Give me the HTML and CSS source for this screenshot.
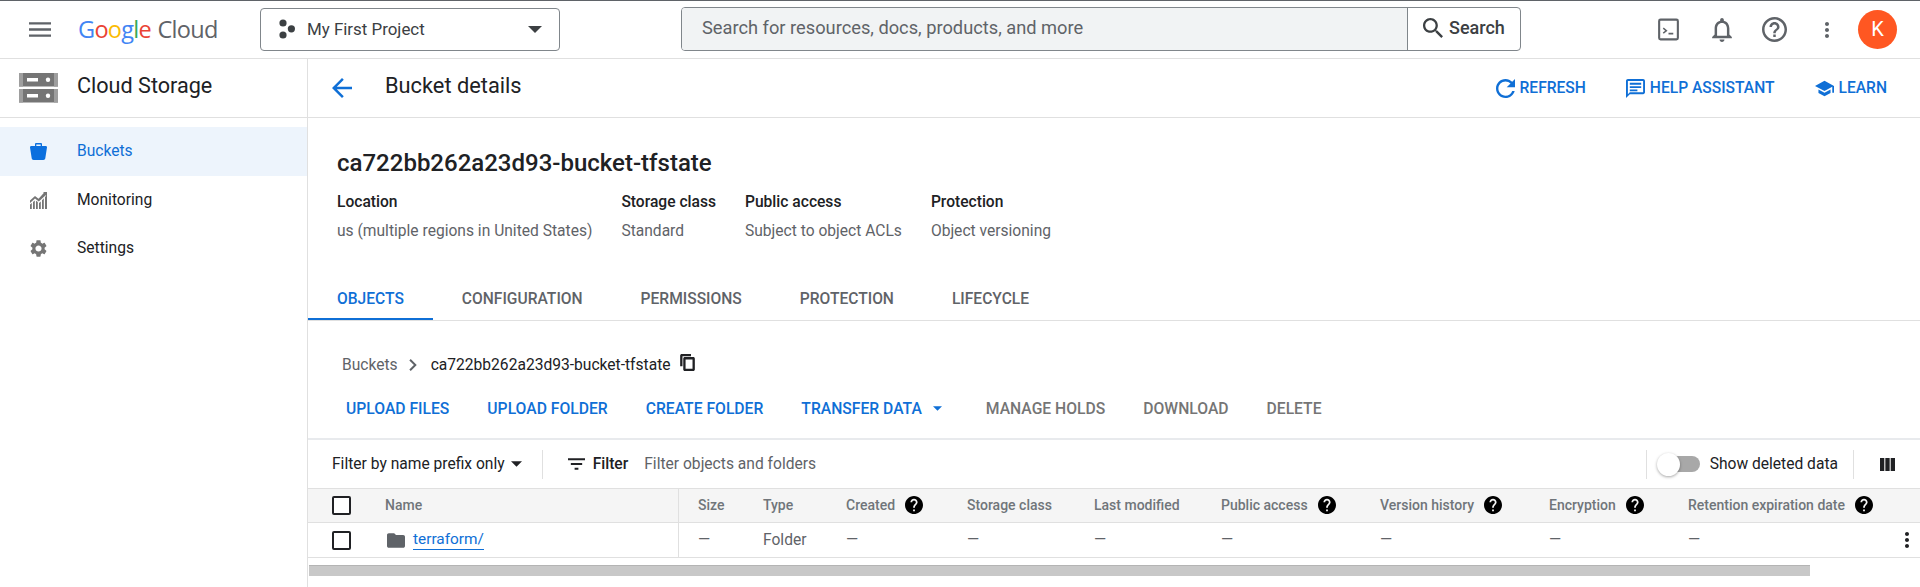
FILE: index.html
```html
<!DOCTYPE html>
<html lang="en">
<head>
  <meta charset="UTF-8">
  <title>Bucket details - Cloud Storage</title>
  <link rel="stylesheet" href="styles.css">
</head>
<body>

  <!-- Icon sprite -->
  <svg class="sprite" aria-hidden="true">
    <symbol id="i-help" viewBox="2 2 20 20"><path d="M12 2C6.48 2 2 6.48 2 12s4.48 10 10 10 10-4.48 10-10S17.52 2 12 2zm1 17h-2v-2h2v2zm2.07-7.75l-.9.92C13.45 12.9 13 13.5 13 15h-2v-.5c0-1.1.45-2.1 1.17-2.83l1.24-1.26c.37-.36.59-.86.59-1.41 0-1.1-.9-2-2-2s-2 .9-2 2H8c0-2.21 1.79-4 4-4s4 1.79 4 4c0 .88-.36 1.68-.93 2.25z"/></symbol>
    <symbol id="i-more" viewBox="0 0 24 24"><path d="M12 8c1.1 0 2-.9 2-2s-.9-2-2-2-2 .9-2 2 .9 2 2 2zm0 2c-1.1 0-2 .9-2 2s.9 2 2 2 2-.9 2-2-.9-2-2-2zm0 6c-1.1 0-2 .9-2 2s.9 2 2 2 2-.9 2-2-.9-2-2-2z"/></symbol>
    <symbol id="i-drop" viewBox="7 10 10 5"><path d="M7 10l5 5 5-5z"/></symbol>
  </svg>

  <!-- Top bar -->
  <header class="topbar">
    <svg class="icon menu-icon" viewBox="3 6 18 12"><path d="M3 18h18v-2H3v2zm0-5h18v-2H3v2zm0-7v2h18V6H3z"/></svg>
    <div class="logo">
      <span class="blue">G</span><span class="red">o</span><span class="yellow">o</span><span class="blue">g</span><span class="green">l</span><span class="red">e</span>
      <span class="logo-cloud">Cloud</span>
    </div>
    <div class="project">
      <svg class="project-icon" viewBox="0 0 16 20"><circle cx="4" cy="4" r="3.6"/><circle cx="12.4" cy="9.8" r="3.6"/><circle cx="4" cy="16" r="3.6"/></svg>
      <span class="project-name">My First Project</span>
      <svg class="project-drop"><use href="#i-drop"/></svg>
    </div>
    <div class="search">
      <div class="search-input">Search for resources, docs, products, and more</div>
      <div class="search-btn">
        <svg class="icon" viewBox="3 3 17.5 17.5"><path d="M15.5 14h-.79l-.28-.27C15.41 12.59 16 11.11 16 9.5 16 5.91 13.09 3 9.5 3S3 5.91 3 9.5 5.91 16 9.5 16c1.61 0 3.09-.59 4.23-1.57l.27.28v.79l5 4.99L20.49 19l-4.99-5zm-6 0C7.01 14 5 11.99 5 9.5S7.01 5 9.5 5 14 7.01 14 9.5 11.99 14 9.5 14z"/></svg>
        <span>Search</span>
      </div>
    </div>
    <div class="top-actions">
      <svg class="icon terminal" viewBox="0 0 22 23"><rect x="1.2" y="1.2" width="19.6" height="20.6" rx="1.5" fill="none" stroke="#5f6368" stroke-width="2.2"/><path d="M6 9.5l4 3.2-4 3.2-1-1.2 2.5-2-2.5-2zM11 15h5v1.7h-5z"/></svg>
      <svg class="icon bell" viewBox="4 2.5 16 19.5"><path d="M12 22c1.1 0 2-.9 2-2h-4c0 1.1.9 2 2 2zm6-6v-5c0-3.07-1.63-5.64-4.5-6.32V4c0-.83-.67-1.5-1.5-1.5s-1.5.67-1.5 1.5v.68C7.64 5.36 6 7.92 6 11v5l-2 2v1h16v-1l-2-2zm-2 1H8v-6c0-2.48 1.51-4.5 4-4.5s4 2.02 4 4.5v6z"/></svg>
      <svg class="icon help-top" viewBox="2 2 20 20"><path d="M11 18h2v-2h-2v2zm1-16C6.48 2 2 6.48 2 12s4.48 10 10 10 10-4.48 10-10S17.52 2 12 2zm0 18c-4.41 0-8-3.59-8-8s3.59-8 8-8 8 3.59 8 8-3.59 8-8 8zm0-14c-2.21 0-4 1.79-4 4h2c0-1.1.9-2 2-2s2 .9 2 2c0 2-3 1.75-3 5h2c0-2.25 3-2.5 3-5 0-2.21-1.79-4-4-4z"/></svg>
      <svg class="icon more-top"><use href="#i-more"/></svg>
      <div class="avatar">K</div>
    </div>
  </header>

  <div class="layout">
    <!-- Sidebar -->
    <aside class="sidebar">
      <div class="side-title">
        <svg class="storage-icon" viewBox="0 0 39 30">
          <path fill="#757575" d="M0 0h39v13.5H0zM0 16h39v13.5H0z"/>
          <path fill="#9e9e9e" d="M0 0h4v13.5H0zM35 0h4v13.5h-4zM0 16h4v13.5H0zM35 16h4v13.5h-4z"/>
          <path fill="#fff" d="M8 5h11v3.5H8zM8 21h11v3.5H8z"/>
          <circle fill="#fff" cx="29" cy="6.7" r="2.2"/><circle fill="#fff" cx="29" cy="22.7" r="2.2"/>
        </svg>
        <span>Cloud Storage</span>
      </div>
      <nav class="side-nav">
        <div class="side-item active">
          <svg class="side-icon" viewBox="0 0 17 17"><path d="M5 1.2C5 .5 5.5 0 6.2 0h4.6c.7 0 1.2.5 1.2 1.2V3h3.6c.9 0 1.4.6 1.4 1.3 0 .2 0 .4-.1.6l-1.6 10.4c-.2 1-.9 1.7-2 1.7H3.7c-1.1 0-1.8-.7-2-1.7L.1 4.9C0 4.7 0 4.5 0 4.3 0 3.6.5 3 1.4 3H5zM6.3 1.4V3h4.4V1.4z"/></svg>
          <span>Buckets</span>
        </div>
        <div class="side-item">
          <svg class="side-icon" viewBox="0 0 17 17"><path d="M0 8.5l5-4.5 3.5 2.8L14 .8 12.8 0H17v4.5l-1.3-1.2-6.9 6.200L5 6.5 0 11zM0 12.5l1.800-1.600V17H0zM3 10l1.800-1.600V17H3zM6 8.800l1.800 1.300V17H6zM9 11l1.800-1.500V17H9zM12 8.200l1.800-2V17H12zM15 5l2-2V17h-2z"/></svg>
          <span>Monitoring</span>
        </div>
        <div class="side-item">
          <svg class="side-icon" viewBox="2.5 2 19 20"><path d="M19.14 12.94c.04-.3.06-.61.06-.94 0-.32-.02-.64-.07-.94l2.03-1.58c.18-.14.23-.41.12-.61l-1.92-3.32c-.12-.22-.37-.29-.59-.22l-2.39.96c-.5-.38-1.03-.7-1.62-.94l-.36-2.54c-.04-.24-.24-.41-.48-.41h-3.84c-.24 0-.43.17-.47.41l-.36 2.54c-.59.24-1.13.57-1.62.94l-2.39-.96c-.22-.08-.47 0-.59.22L2.74 8.87c-.12.21-.08.47.12.61l2.03 1.58c-.05.3-.09.63-.09.94s.02.64.07.94l-2.03 1.58c-.18.14-.23.41-.12.61l1.92 3.32c.12.22.37.29.59.22l2.39-.96c.5.38 1.03.7 1.62.94l.36 2.54c.05.24.24.41.48.41h3.84c.24 0 .44-.17.47-.41l.36-2.54c.59-.24 1.13-.56 1.62-.94l2.39.96c.22.08.47 0 .59-.22l1.92-3.32c.12-.22.07-.47-.12-.61l-2.01-1.58zM12 15.6c-1.98 0-3.6-1.62-3.6-3.6s1.62-3.6 3.6-3.6 3.6 1.62 3.6 3.6-1.62 3.6-3.6 3.6z"/></svg>
          <span>Settings</span>
        </div>
      </nav>
    </aside>

    <!-- Content -->
    <main class="content">
      <div class="page-head">
        <svg class="back" viewBox="4 4 16 16"><path d="M20 11H7.83l5.59-5.59L12 4l-8 8 8 8 1.41-1.41L7.83 13H20v-2z"/></svg>
        <h1 class="page-title">Bucket details</h1>
        <div class="head-actions">
          <div class="head-btn">
            <svg viewBox="4 4 16 16"><path d="M17.65 6.35C16.2 4.9 14.21 4 12 4c-4.42 0-7.99 3.58-7.99 8s3.57 8 7.99 8c3.73 0 6.84-2.55 7.73-6h-2.08c-.82 2.33-3.04 4-5.65 4-3.31 0-6-2.69-6-6s2.69-6 6-6c1.66 0 3.14.69 4.22 1.78L13 11h7V4l-2.35 2.35z"/></svg>
            <span>REFRESH</span>
          </div>
          <div class="head-btn">
            <svg viewBox="2 2 20 20"><path d="M20 2H4c-1.1 0-2 .9-2 2v18l4-4h14c1.1 0 2-.9 2-2V4c0-1.1-.9-2-2-2zm0 14H6l-2 2V4h16v12zM6 6h12v2H6zM6 9.5h12v2H6zM6 13h8v2H6z"/></svg>
            <span>HELP ASSISTANT</span>
          </div>
          <div class="head-btn">
            <svg viewBox="1 3 22 18"><path d="M5 13.18v4L12 21l7-3.82v-4L12 17l-7-3.82zM12 3L1 9l11 6 9-4.91V17h2V9L12 3z"/></svg>
            <span>LEARN</span>
          </div>
        </div>
      </div>

      <section class="bucket-info">
        <h2 class="bucket-name">ca722bb262a23d93-bucket-tfstate</h2>
        <div class="meta">
          <div><div class="meta-label">Location</div><div class="meta-value">us (multiple regions in United States)</div></div>
          <div><div class="meta-label">Storage class</div><div class="meta-value">Standard</div></div>
          <div><div class="meta-label">Public access</div><div class="meta-value">Subject to object ACLs</div></div>
          <div><div class="meta-label">Protection</div><div class="meta-value">Object versioning</div></div>
        </div>
      </section>

      <div class="tabs">
        <div class="tab active">OBJECTS</div>
        <div class="tab">CONFIGURATION</div>
        <div class="tab">PERMISSIONS</div>
        <div class="tab">PROTECTION</div>
        <div class="tab">LIFECYCLE</div>
      </div>

      <div class="crumbs">
        <span class="crumb-root">Buckets</span>
        <svg class="crumb-sep" viewBox="8.5 6 7.5 12"><path d="M10 6L8.59 7.41 13.17 12l-4.58 4.59L10 18l6-6z"/></svg>
        <span class="crumb-name">ca722bb262a23d93-bucket-tfstate</span>
        <svg class="copy" viewBox="2 1 19 22"><path d="M16 1H4c-1.1 0-2 .9-2 2v14h3V4h11V1zm3 4H8c-1.1 0-2 .9-2 2v14c0 1.1.9 2 2 2h11c1.1 0 2-.9 2-2V7c0-1.1-.9-2-2-2zm-1 15H9V8h9v12z"/></svg>
      </div>

      <div class="actions">
        <span class="act">UPLOAD FILES</span>
        <span class="act">UPLOAD FOLDER</span>
        <span class="act">CREATE FOLDER</span>
        <span class="act act-drop">TRANSFER DATA <svg><use href="#i-drop"/></svg></span>
        <span class="act off">MANAGE HOLDS</span>
        <span class="act off">DOWNLOAD</span>
        <span class="act off">DELETE</span>
      </div>

      <div class="filter-bar">
        <span class="prefix">Filter by name prefix only</span>
        <svg class="prefix-drop"><use href="#i-drop"/></svg>
        <span class="vline vline-a"></span>
        <svg class="filter-icon" viewBox="3 6 18 12"><path d="M10 18h4v-2h-4v2zM3 6v2h18V6H3zm3 7h12v-2H6v2z"/></svg>
        <span class="filter-word">Filter</span>
        <span class="filter-hint">Filter objects and folders</span>
        <span class="vline vline-b"></span>
        <span class="toggle"><span class="toggle-knob"></span></span>
        <span class="toggle-label">Show deleted data</span>
        <span class="vline vline-c"></span>
        <svg class="columns-icon" viewBox="0 0 15 13"><path d="M0 0h4.3v13H0zM5.35 0h4.3v13h-4.3zM10.7 0H15v13h-4.3z"/></svg>
      </div>

      <div class="table">
        <div class="row row-head">
          <div class="cell cell-name"><span class="check"></span><span class="name-label">Name</span></div>
          <div class="cell">Size</div>
          <div class="cell">Type</div>
          <div class="cell">Created <svg class="q"><use href="#i-help"/></svg></div>
          <div class="cell">Storage class</div>
          <div class="cell">Last modified</div>
          <div class="cell">Public access <svg class="q"><use href="#i-help"/></svg></div>
          <div class="cell">Version history <svg class="q"><use href="#i-help"/></svg></div>
          <div class="cell">Encryption <svg class="q"><use href="#i-help"/></svg></div>
          <div class="cell">Retention expiration date <svg class="q"><use href="#i-help"/></svg></div>
        </div>
        <div class="row">
          <div class="cell cell-name">
            <span class="check"></span>
            <svg class="folder" viewBox="2 4 20 16"><path d="M10 4H4c-1.1 0-1.99.9-1.99 2L2 18c0 1.1.9 2 2 2h16c1.1 0 2-.9 2-2V8c0-1.1-.9-2-2-2h-8l-2-2z"/></svg>
            <a class="link">terraform/</a>
          </div>
          <div class="cell">—</div>
          <div class="cell">Folder</div>
          <div class="cell">—</div>
          <div class="cell">—</div>
          <div class="cell">—</div>
          <div class="cell">—</div>
          <div class="cell">—</div>
          <div class="cell">—</div>
          <div class="cell cell-last">— <svg class="row-more"><use href="#i-more"/></svg></div>
        </div>
      </div>

      <div class="hscroll"><div class="hscroll-thumb"></div></div>
    </main>
  </div>

</body>
</html>
```

FILE: styles.css
```css
* { margin: 0; padding: 0; box-sizing: border-box; }
html, body { height: 100%; overflow: hidden; }
body { background: #fff; color: #202124; font-family: Roboto, "Liberation Sans", sans-serif; font-size: 15.6px; }
svg { display: block; flex: none; fill: currentColor; }
.sprite { display: none; }
.icon { color: #5f6368; }

/* Top bar */
.topbar {
  height: 59px;
  display: flex;
  align-items: center;
  border-top: 1px solid #5f6368;
  border-bottom: 1px solid #e0e0e0;
}
.menu-icon { width: 22px; height: 15px; margin-left: 29px; }
.logo { width: 140px; margin: 0 0 2px 27px; font-family: "Open Sans", sans-serif; font-size: 23.5px; letter-spacing: -0.7px; white-space: nowrap; }
.logo-cloud { color: #5f6368; margin-left: 1px; }
.blue { color: #4285f4; }
.red { color: #ea4335; }
.yellow { color: #fbbc05; }
.green { color: #34a853; }

.project {
  width: 300px;
  height: 43px;
  margin-left: 42px;
  display: flex;
  align-items: center;
  border: 1px solid #80868b;
  border-radius: 4px;
  color: #3c4043;
}
.project-icon { width: 16px; height: 20px; margin: 0 0 2px 18px; }
.project-name { margin: 0 0 2px 12px; font-size: 16.9px; flex: 1; }
.project-drop { width: 14px; height: 7px; margin-right: 17px; }

.search {
  width: 840px;
  height: 44px;
  margin-left: 121px;
  margin-top: -2px;
  display: flex;
  border: 1px solid #80868b;
  border-radius: 4px;
  overflow: hidden;
}
.search-input { flex: 1; padding-left: 20px; line-height: 40px; background: #f1f3f4; color: #5f6368; font-size: 18.25px; border-right: 1px solid #80868b; }
.search-btn { width: 112px; display: flex; align-items: center; gap: 6px; padding: 0 0 2px 15px; font-size: 18px; font-weight: 500; color: #3c4043; }
.search-btn svg { width: 20px; height: 20px; color: #3c4043; }

.top-actions { flex: 1; display: flex; align-items: center; }
.terminal { width: 21px; height: 23px; margin-left: 137px; }
.bell { width: 20px; height: 24px; margin-left: 33px; }
.help-top { width: 25px; height: 25px; margin-left: 30px; }
.more-top { width: 24px; height: 24px; margin-left: 28px; }
.avatar { width: 39px; height: 39px; margin-left: 19px; border-radius: 50%; background: #ff5722; color: #fff; font-size: 20px; line-height: 39px; text-align: center; }

/* Layout */
.layout { display: flex; height: 528px; }
.sidebar { width: 308px; flex: none; border-right: 1px solid #e0e0e0; }
.side-title { height: 59px; display: flex; align-items: center; border-bottom: 1px solid #e0e0e0; font-size: 21.6px; color: #202124; }
.side-title span { margin-bottom: 5px; }
.storage-icon { width: 39px; height: 30px; margin-left: 19px; margin-right: 19px; }
.side-nav { padding-top: 9px; }
.side-item { height: 49px; padding-bottom: 1px; display: flex; align-items: center; color: #202124; }
.side-item:last-child { height: 48px; padding-bottom: 2px; }
.side-item.active { background: #edf4fc; color: #0f6fd6; }
.side-icon { width: 17px; height: 17px; margin-left: 30px; margin-right: 30px; color: #757575; }
.active .side-icon { color: #0b6fde; }

.content { flex: 1; min-width: 0; }
.page-head { height: 59px; display: flex; align-items: center; border-bottom: 1px solid #e0e0e0; }
.back { width: 20px; height: 20px; margin-left: 24px; color: #0f6fd6; }
.page-title { margin: 0 0 5px 33px; font-size: 21.8px; font-weight: 400; flex: 1; }
.head-actions { display: flex; align-items: center; color: #0f6fd6; font-weight: 500; font-size: 15.6px; }
.head-btn { display: flex; align-items: center; gap: 5px; margin-right: 40px; }
.head-btn:last-child { margin-right: 33px; }
.head-btn svg { width: 19px; height: 19px; }

/* Bucket summary */
.bucket-info { height: 144px; padding: 30px 0 0 29px; }
.bucket-name { font-size: 24px; font-weight: 500; line-height: 30px; }
.meta { display: flex; gap: 29px; margin-top: 11px; }
.meta-label { font-weight: 500; font-size: 15.6px; line-height: 26px; }
.meta-value { color: #5f6368; line-height: 32px; }

/* Tabs */
.tabs { height: 59px; display: flex; border-bottom: 1px solid #e0e0e0; }
.tab { padding: 27px 29px 0; line-height: 20px; font-size: 15.6px; font-weight: 500; color: #5f6368; }
.tab.active { color: #0f6fd6; border-bottom: 2px solid #0f6fd6; height: 58px; }

.crumbs { height: 60px; display: flex; align-items: center; padding: 27px 0 0 34px; }
.crumb-root { color: #5f6368; }
.crumb-sep { width: 8px; height: 12px; margin: 0 14px 0 11px; color: #5f6368; }
.copy { width: 15px; height: 17px; margin-left: 9px; margin-top: -4px; color: #202124; }

.actions { height: 59px; display: flex; align-items: center; gap: 38px; padding: 0 0 2px 38px; border-bottom: 2px solid #e8eaed; font-size: 15.7px; font-weight: 500; color: #0f6fd6; }
.act-drop { display: flex; align-items: center; gap: 11px; margin-right: 6px; }
.act-drop svg { width: 9px; height: 5px; }
.off { color: #757575; }

/* Filter row */
.filter-bar { height: 48px; display: flex; align-items: center; }
.prefix { margin-left: 24px; }
.prefix-drop { width: 11px; height: 6px; margin-left: 6px; }
.vline { width: 1px; height: 29px; background: #e0e0e0; }
.vline-a { margin-left: 20px; }
.filter-icon { width: 17px; height: 12px; margin-left: 25px; color: #202124; }
.filter-word { margin-left: 8px; font-weight: 500; }
.filter-hint { margin-left: 16px; color: #5f6368; flex: 1; }
.vline-b { margin-right: 10px; }
.toggle { width: 43px; height: 20px; display: flex; align-items: center; position: relative; }
.toggle::before { content: ""; width: 34px; height: 16px; margin-left: 9px; border-radius: 8px; background: #a8a8a8; }
.toggle-knob { position: absolute; left: 0; top: -1px; width: 23px; height: 23px; border-radius: 50%; background: #fff; box-shadow: 0 1px 3px rgba(0,0,0,0.35); }
.toggle-label { margin-left: 10px; }
.vline-c { margin-left: 15px; }
.columns-icon { width: 15px; height: 13px; margin: 0 25px 0 26px; color: #202124; }

/* Table */
.row {
  height: 35px;
  display: grid;
  grid-template-columns: 371px 84px 83px 121px 127px 127px 159px 169px 139px 1fr;
  align-items: center;
  border-bottom: 1px solid #e0e0e0;
}
.row-head { background: #f5f5f5; border-top: 1px solid #e0e0e0; font-weight: 500; }
.cell { display: flex; align-items: center; height: 100%; white-space: nowrap; color: #5f6368; }
.row-head .cell { padding-bottom: 1px; font-size: 14px; color: #70757a; }
.cell-name { padding-left: 24px; border-right: 1px solid #e0e0e0; }
.cell-name + .cell { padding-left: 19px; }
.check { width: 19px; height: 19px; border: 2px solid #202124; border-radius: 2px; background: #fff; }
.name-label { margin-left: 34px; }
.folder { width: 18px; height: 15px; margin-left: 36px; color: #5f6368; }
.link { margin-left: 8px; color: #0f6fd6; border-bottom: 1px solid #0f6fd6; line-height: 19px; font-size: 15.4px; }
.q { width: 18px; height: 18px; margin-left: 10px; color: #000; }
.cell-last { position: relative; }
.row-more { position: absolute; right: 1px; top: 5px; width: 24px; height: 24px; color: #202124; }

.hscroll { height: 11px; margin-top: 7px; margin-left: 1px; }
.hscroll-thumb { width: 1501px; height: 11px; background: #c8c8c8; border-top: 1px solid #b4b4b4; }
```
